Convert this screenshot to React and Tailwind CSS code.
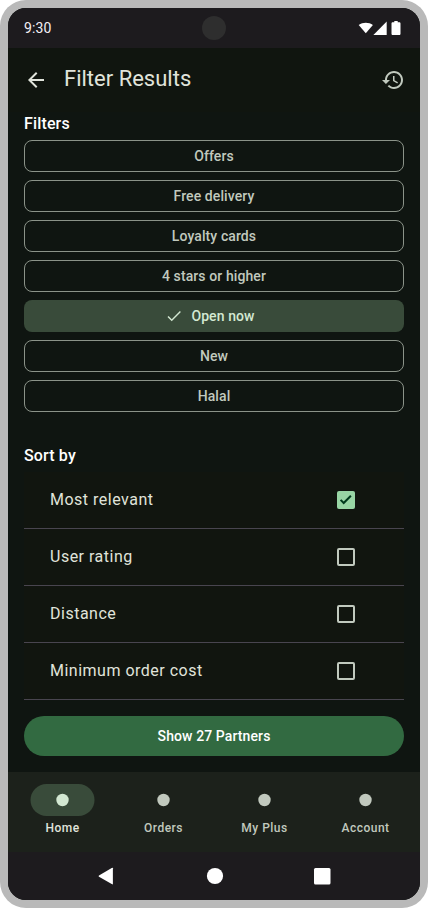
import React from "react";

const filters = [
  { label: "Offers" },
  { label: "Free delivery" },
  { label: "Loyalty cards" },
  { label: "4 stars or higher" },
  { label: "Open now", selected: true },
  { label: "New" },
  { label: "Halal" },
];

const sortOptions = [
  { label: "Most relevant", checked: true },
  { label: "User rating" },
  { label: "Distance" },
  { label: "Minimum order cost" },
];

const tabs = [
  { label: "Home", active: true },
  { label: "Orders" },
  { label: "My Plus" },
  { label: "Account" },
];

function StatusBar() {
  return (
    <div className="relative flex h-10 shrink-0 items-center justify-between bg-[#1d1b1e] pl-4 pr-[18px] text-white">
      <span className="text-sm leading-5 tracking-[0.14px] text-[#f4eff4]">9:30</span>
      <span className="absolute left-[194px] top-2 size-6 rounded-full bg-[#2e2e2e]" />
      <svg width="46" height="16" viewBox="0 0 46 16" fill="currentColor">
        <path d="M2.7 5.1C6.700 1.900 12.900 1.900 16.900 5.100L9.800 13.200Z" />
        <path d="M30.700 1.500V14.900H17.400Z" />
        <path d="M38.300 1h3.400v1.300h1.500c.8 0 1.300.5 1.300 1.300v10.100c0 .8-.5 1.300-1.300 1.300h-6.400c-.8 0-1.300-.5-1.300-1.300V3.600c0-.8.5-1.300 1.300-1.300h1.500z" />
      </svg>
    </div>
  );
}

function Header() {
  return (
    <header className="flex h-16 shrink-0 items-center bg-[#10150f] pl-4 pr-[15px]">
      <svg className="text-[#e0e4db]" width="24" height="24" viewBox="0 0 24 24" fill="currentColor">
        <path d="M20 11H7.830l5.590-5.590L12 4l-8 8 8 8 1.410-1.410L7.830 13H20v-2z" />
      </svg>
      <h1 className="ml-4 flex-1 pb-[3px] text-[22px] leading-7 text-[#e0e4db]">Filter Results</h1>
      <svg className="text-[#c1c9be]" width="24" height="24" viewBox="0 0 24 24" fill="currentColor">
        <path d="M13 3c-4.970 0-9 4.030-9 9H1l3.890 3.890.07.14L9 12H6c0-3.870 3.130-7 7-7s7 3.130 7 7-3.130 7-7 7c-1.930 0-3.680-.79-4.940-2.060l-1.420 1.420C8.270 19.990 10.510 21 13 21c4.970 0 9-4.030 9-9s-4.030-9-9-9zm-1 5v5l4.280 2.540.72-1.210-3.500-2.080V8H12z" />
      </svg>
    </header>
  );
}

function FilterChip({ label, selected }) {
  if (selected) {
    return (
      <button className="flex h-8 items-center justify-center gap-2 rounded-lg bg-[#394b3a] pr-2 text-sm font-medium leading-5 tracking-[0.1px] text-[#d3e8d2]">
        <svg width="18" height="18" viewBox="0 0 18 18" fill="currentColor">
          <path d="M6.750 12.250L3.560 9.060 2.500 10.060 6.750 14.250 15.900 5.100 14.900 4.100z" />
        </svg>
        {label}
      </button>
    );
  }
  return (
    <button className="flex h-8 items-center justify-center rounded-lg border border-[#8b9389] text-sm font-medium leading-5 tracking-[0.1px] text-[#c1c9be]">
      {label}
    </button>
  );
}

function SortRow({ label, checked }) {
  return (
    <label className="flex h-[57px] items-center justify-between border-b border-[#49454f] pl-[26px] pr-[49px]">
      <span className="pb-px text-base leading-6 tracking-[0.5px] text-[#e0e4db]">{label}</span>
      {checked ? (
        <span className="flex size-[18px] items-center justify-center rounded-xs bg-[#98d5a4]">
          <svg width="18" height="18" viewBox="0 0 18 18" fill="#00391c">
            <path d="M6.700 13.400L2.900 9.600l1.400-1.400 2.400 2.400 6.500-6.500 1.400 1.400z" />
          </svg>
        </span>
      ) : (
        <span className="size-[18px] rounded-xs border-2 border-[#c1c9be]" />
      )}
    </label>
  );
}

function Tab({ label, active }) {
  return (
    <div className="flex flex-1 flex-col items-center gap-1 pt-3">
      <svg width="65" height="32" viewBox="0 0 65 32">
        {active && <rect x="0.500" width="64" height="32" rx="16" fill="#394b3a" />}
        <circle cx="32.500" cy="16" r="6.200" fill={active ? "#d3e8d2" : "#c1c9be"} />
      </svg>
      <span className={active ? "text-xs font-medium tracking-[0.5px] text-[#e0e4db]" : "text-xs font-medium tracking-[0.5px] text-[#c1c9be]"}>
        {label}
      </span>
    </div>
  );
}

export default function App() {
  return (
    <div className="h-[908px] w-[428px] bg-white font-['Roboto',sans-serif]">
      <div className="flex h-full w-full flex-col rounded-[26px] bg-[#b9b9b9] p-2">
        <div className="flex flex-1 flex-col overflow-hidden rounded-[18px] bg-[#0f1511]">
          <StatusBar />
          <Header />
          <main className="flex flex-col px-4">
            <h2 className="mb-1 text-base font-medium leading-6 tracking-[0.15px] text-white">Filters</h2>
            <div className="flex flex-col gap-2">
              {filters.map((f) => (
                <FilterChip key={f.label} {...f} />
              ))}
            </div>
            <h2 className="mt-8 text-base font-medium leading-6 tracking-[0.15px] text-white">Sort by</h2>
            <div className="mt-1 flex flex-col bg-[#11150f]">
              {sortOptions.map((o) => (
                <SortRow key={o.label} {...o} />
              ))}
            </div>
            <button className="mt-4 h-10 rounded-full bg-[#326a41] text-sm font-medium leading-5 tracking-[0.1px] text-white">
              Show 27 Partners
            </button>
          </main>
          <nav className="mt-auto flex h-20 shrink-0 gap-2 bg-[#1c211b] px-2">
            {tabs.map((t) => (
              <Tab key={t.label} {...t} />
            ))}
          </nav>
          <div className="flex h-12 shrink-0 justify-center bg-[#1d1b1e]">
            <svg width="412" height="48" viewBox="0 0 412 48" fill="#fff">
              <path d="M104.900 16.200v15.700c0 .4-.4.600-.8.400L91 24.700c-.5-.3-.5-1 0-1.300l13.100-7.600c.4-.2.800 0 .8.400z" />
              <circle cx="207" cy="24" r="8.100" />
              <rect x="306" y="16" width="16.500" height="16.500" rx="1.500" />
            </svg>
          </div>
        </div>
      </div>
    </div>
  );
}
